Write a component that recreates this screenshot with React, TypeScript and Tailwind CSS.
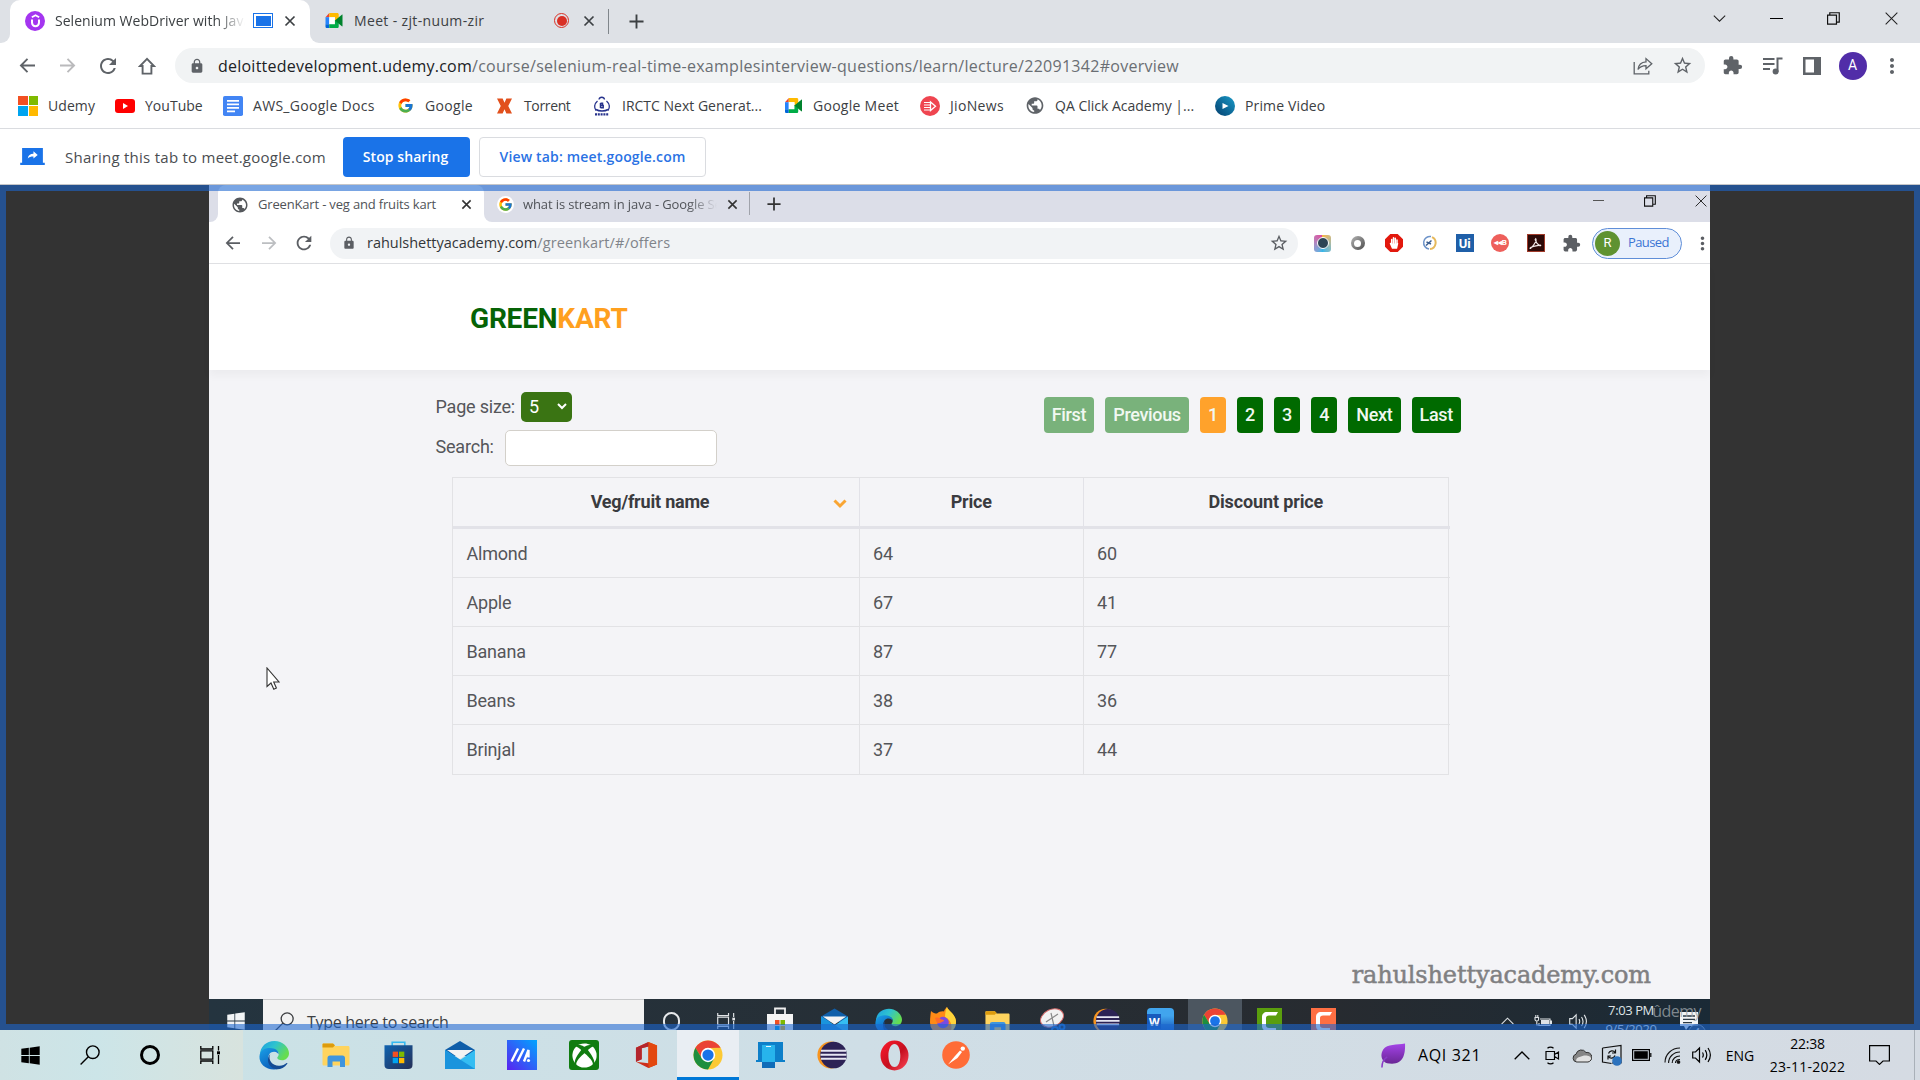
import type { ReactNode } from "react";
import { FcGoogle } from "react-icons/fc";
import { FaXbox, FaWindows } from "react-icons/fa";
import { MdLock, MdStarBorder, MdExtension, MdRefresh, MdPublic, MdMoreVert } from "react-icons/md";

/* ---------- line icons ---------- */

const Cross = ({ className = "" }: { className?: string }) => (
  <svg viewBox="0 0 12 12" className={className} fill="none" stroke="currentColor" strokeWidth="1.7">
    <path d="M1.5 1.5l9 9M10.5 1.5l-9 9" />
  </svg>
);

const Plus = ({ className = "" }: { className?: string }) => (
  <svg viewBox="0 0 16 16" className={className} fill="none" stroke="currentColor" strokeWidth="2">
    <path d="M8 0.5v15M0.5 8h15" />
  </svg>
);

const Arrow = ({ className = "" }: { className?: string }) => (
  <svg viewBox="0 0 18 16" className={className} fill="none" stroke="currentColor" strokeWidth="2">
    <path d="M17 8H2M9 1L2 8l7 7" />
  </svg>
);

const HomeIcon = () => (
  <svg viewBox="0 0 18 18" className="h-[18px] w-[18px]" fill="none" stroke="#5f6368" strokeWidth="1.9">
    <path d="M9 1.8L2 9h2.6v7.6h8.8V9H16z" />
  </svg>
);

const ShareIcon = () => (
  <svg viewBox="0 0 20 20" className="h-5 w-5" fill="none" stroke="#5f6368" strokeWidth="1.3">
    <path d="M1.2 6v11.8h14.6v-3" />
    <path d="M5 13.5c.6-5 3.6-7.3 8-7.6V2.6l5.8 5.2-5.8 5v-3.2c-3.6 0-6 1-8 3.9z" />
  </svg>
);

const QueueIcon = () => (
  <svg viewBox="0 0 20 20" className="h-5 w-5" fill="none" stroke="#5f6368" strokeWidth="2">
    <path d="M0 3h11.5M0 8h11.5M0 13h7M14.5 16V2.5h5" />
    <circle cx="12.6" cy="15.6" r="2" fill="#5f6368" />
  </svg>
);

const SidePanelIcon = () => (
  <svg viewBox="0 0 18 18" className="h-[18px] w-[18px]">
    <path d="M0 0h18v18H0z" fill="#5f6368" />
    <path d="M2.5 2.5h8.5v13H2.5z" fill="#fff" />
  </svg>
);

const Restore = ({ className = "" }: { className?: string }) => (
  <svg viewBox="0 0 14 14" className={className} fill="none" stroke="#111" strokeWidth="1.3">
    <path d="M.6 3.4h9.6V13H.6zM3 3.4V.8h10.2v10h-3" />
  </svg>
);

const ThinCross = ({ className = "" }: { className?: string }) => (
  <svg viewBox="0 0 14 14" className={className} fill="none" stroke="#222" strokeWidth="1.1">
    <path d="M.7.7l12.6 12.6M13.3.7L.7 13.3" />
  </svg>
);

const ChevronUp = ({ className = "" }: { className?: string }) => (
  <svg viewBox="0 0 16 9" className={className} fill="none" stroke="currentColor" strokeWidth="1.3">
    <path d="M.7 8.3L8 1l7.3 7.3" />
  </svg>
);

const SearchIcon = ({ className = "" }: { className?: string }) => (
  <svg viewBox="0 0 20 20" className={className} fill="none" stroke="currentColor" strokeWidth="1.4">
    <circle cx="12.8" cy="7.2" r="6.3" />
    <path d="M8.3 11.7L.6 19.4" />
  </svg>
);

const TaskView = ({ className = "" }: { className?: string }) => (
  <svg viewBox="0 0 20 20" className={className} fill="none" stroke="currentColor" strokeWidth="1.3">
    <path d="M.8 1v3h12V1M.8 19v-3h12v3M.8 5.8h12v8.4H.8zM18.5 1v4.5M18.5 10v9" />
    <path d="M17 6.3h3v3h-3z" fill="currentColor" stroke="none" />
  </svg>
);

const Volume = ({ className = "" }: { className?: string }) => (
  <svg viewBox="0 0 20 18" className={className} fill="none" stroke="currentColor" strokeWidth="1.2">
    <path d="M.7 6v6h2.8l4 4V2l-4 4zM10.5 6.5c1 1.6 1 3.4 0 5M13.2 4.2c2 3 2 6.6 0 9.6M16 2c3 4.4 3 9.6 0 14" />
  </svg>
);

/* ---------- brand icons ---------- */

const MeetIcon = ({ className = "" }: { className?: string }) => (
  <svg viewBox="0 0 20 18" className={className}>
    <path d="M5 1v4.500H1z" fill="#ea4335" />
    <path d="M1 5.500h4V13H1z" fill="#2684fc" />
    <path d="M1 13h4v4H2.400C1.600 17 1 16.400 1 15.600z" fill="#0066da" />
    <path d="M5 1h8.500c.8 0 1.500.6 1.500 1.400V7l-4 3V5.500H5z" fill="#ffba00" />
    <path d="M5 5.500h6V13H5z" fill="#fff" />
    <path d="M5 13h6V8.500l4 2.500v4.600c0 .8-.7 1.400-1.500 1.400H5z" fill="#00ac47" />
    <path d="M11 9l7.300-6.200c.4-.3.700-.1.700.3v11.800c0 .4-.3.600-.7.300z" fill="#00832d" />
  </svg>
);

const Chrome = ({ className = "" }: { className?: string }) => (
  <svg viewBox="0 0 32 32" className={className}>
    <circle cx="16" cy="16" r="15.500" fill="#fcc934" />
    <path d="M2.580 8.250a15.500 15.500 0 0 1 26.840 0L16 8.500l-6.500 11.250z" fill="#ea4335" />
    <path d="M2.580 8.250A15.500 15.500 0 0 0 16 31.500l6.500-11.750H9.500z" fill="#1e8e3e" />
    <circle cx="16" cy="16" r="7.700" fill="#fff" />
    <circle cx="16" cy="16" r="6" fill="#1a73e8" />
  </svg>
);

const Edge = ({ className = "" }: { className?: string }) => (
  <svg viewBox="0 0 32 32" className={className}>
    <defs>
      <linearGradient id="edgeTop" x1="0" y1="0" x2="1" y2="0.500">
        <stop offset="0" stopColor="#1b9de2" />
        <stop offset=".5" stopColor="#2fc3cf" />
        <stop offset="1" stopColor="#66dd4f" />
      </linearGradient>
      <linearGradient id="edgeSide" x1="0" y1="0" x2="0.600" y2="1">
        <stop offset="0" stopColor="#1aa0e8" />
        <stop offset="1" stopColor="#0b5cb8" />
      </linearGradient>
    </defs>
    <path d="M1 16C1 7 8 1 16.500 1S32 7.500 32 14c0 4.500-3.500 7.500-7.500 7.500-3 0-5-1-5-2.500 0-1 1.500-1.500 1.500-4 0-3.500-3.500-5-7-5C8 10 3 12 1 16z" fill="url(#edgeTop)" />
    <path d="M.5 17.500C1 11 6 8.500 11.500 8.500c6 0 9.500 3 9.500 6.500 0 0-2-2.500-5-2.500-4 0-6 3-6 6.500 0 7 6 11.500 12 11-2 1-4 1.500-6 1.500C7 31.500 0 25 .5 17.500z" fill="url(#edgeSide)" />
    <path d="M12 15c-3 7 3 13 10 12.500 3 0 5.500-1.500 7.500-3 .5-.3 1 .2.700.700C27 30 21.500 31.800 18 31 10 30 7 20 12 15z" fill="#134a94" />
  </svg>
);

const Folder = ({ className = "" }: { className?: string }) => (
  <svg viewBox="0 0 28 24" className={className}>
    <path d="M.5 1.500C.5.700 1 .5 1.500.5h9.500l2 2.500h13c1 0 1.500.5 1.500 1.500V21c0 1-.5 1.500-1.500 1.500H2C1 22.500.5 22 .5 21z" fill="#ffd45e" />
    <path d="M.5 1.500C.5.700 1 .5 1.500.5h9.500l2 1.800-2 2.200H.5z" fill="#dd9b0c" />
    <path d="M5.500 24v-9c0-1.500 1-2.500 2.500-2.500h12.500c1.500 0 2.500 1 2.500 2.500v9h-5v-5.500h-7.500V24z" fill="#3f95dd" />
  </svg>
);

const Store = ({ className = "" }: { className?: string }) => (
  <svg viewBox="0 0 30 30" className={className}>
    <defs>
      <linearGradient id="storeBag" x1="0" y1="0" x2="1" y2="1">
        <stop offset="0" stopColor="#0f63b0" />
        <stop offset="1" stopColor="#252f56" />
      </linearGradient>
    </defs>
    <path d="M8.500 6V1.800h13V6" fill="none" stroke="#35b9f0" strokeWidth="1.700" />
    <path d="M.5 5h29v20c0 3-1.500 4.500-4.500 4.500H5C2 29.500.5 28 .5 25z" fill="url(#storeBag)" />
    <path d="M9 11.500h5.500V17H9z" fill="#f25022" />
    <path d="M15.500 11.500H21V17h-5.500z" fill="#7fba00" />
    <path d="M9 18h5.500v5.500H9z" fill="#00a4ef" />
    <path d="M15.500 18H21v5.500h-5.500z" fill="#ffb900" />
  </svg>
);

const WhiteStore = () => (
  <svg viewBox="0 0 26 28" className="h-7 w-[26px]">
    <path d="M8 8V1.500h10V8" fill="none" stroke="#eee" strokeWidth="1.800" />
    <path d="M0 7h26v21H0z" fill="#f4f4f4" />
    <path d="M8 13h4.500v5H8z" fill="#f25022" />
    <path d="M13.500 13H18v5h-4.500z" fill="#7fba00" />
    <path d="M8 19h4.500v5H8z" fill="#00a4ef" />
    <path d="M13.500 19H18v5h-4.500z" fill="#ffb900" />
  </svg>
);

const Mail = ({ className = "" }: { className?: string }) => (
  <svg viewBox="0 0 30 28" className={className}>
    <path d="M0 9L15 0l15 9v6H0z" fill="#0f5ea9" />
    <path d="M0 9l15 10L30 9v19H0z" fill="#35bdf2" />
    <path d="M0 9l30 19H0z" fill="#1a94dd" />
    <path d="M2 9h26L15 18z" fill="#f3f3f3" />
  </svg>
);

const Eclipse = ({ className = "" }: { className?: string }) => (
  <svg viewBox="0 0 30 28" className={className}>
    <circle cx="14" cy="14" r="13.600" fill="#f7941e" />
    <circle cx="16.500" cy="14" r="13.300" fill="#2c2255" />
    <path d="M4 9.800h25M3.500 13.800h26M4 17.800h25" stroke="#e6e6f2" strokeWidth="2" />
  </svg>
);

const MyAsus = () => (
  <svg viewBox="0 0 30 30" className="h-[30px] w-[30px]">
    <defs>
      <linearGradient id="asus" x1="1" y1="0" x2="0" y2="1">
        <stop offset="0" stopColor="#00a5ff" />
        <stop offset="1" stopColor="#5a22f0" />
      </linearGradient>
    </defs>
    <path d="M0 0h30v30H0z" fill="url(#asus)" />
    <path d="M4.500 21.500l6.500-13M10.500 21.500L17 8.500" stroke="#fff" strokeWidth="2.400" />
    <path d="M17 21.500l4.500-11.500v7.500" stroke="#fff" strokeWidth="2.400" fill="none" />
    <circle cx="21.500" cy="20.500" r="1.600" fill="#fff" />
  </svg>
);

const Xbox = () => (
  <span className="flex h-[30px] w-[30px] items-center justify-center rounded-[3px] bg-[#107c10]">
    <FaXbox className="h-[25px] w-[25px] text-white" />
  </span>
);

const Office = () => (
  <svg viewBox="0 0 24 28" className="h-7 w-[23px]">
    <defs>
      <linearGradient id="office" x1="0" y1="0" x2="0" y2="1">
        <stop offset="0" stopColor="#e8590c" />
        <stop offset="1" stopColor="#c8281e" />
      </linearGradient>
    </defs>
    <path d="M1 6.500L14 .5l9 3.500v20l-9 3.500L1 21l13 1.500V5L7 7v11.500L1 21z" fill="url(#office)" />
    <path d="M14 .5l9 3.500v20l-9 3.500z" fill="#e3480f" />
    <path d="M1 6.500L14 .5V5L7 7v11.500L1 21z" fill="#b3252d" />
  </svg>
);

const Device = () => (
  <svg viewBox="0 0 30 28" className="h-[28px] w-[30px]">
    <path d="M3 1h25v18h2v2H1v-2h2z" fill="#0d7fc9" />
    <path d="M7 4h13v23H7z" fill="#0f6cb8" />
    <path d="M7 4h13v17H7z" fill="#27b4ec" />
    <path d="M11 5.500h5" stroke="#e8f8ff" />
  </svg>
);

const Opera = () => (
  <svg viewBox="0 0 30 32" className="h-[31px] w-[29px]">
    <defs>
      <linearGradient id="opera" x1="0" y1="0" x2="1" y2="1">
        <stop offset="0" stopColor="#ff1b2d" />
        <stop offset=".55" stopColor="#c50f1f" />
        <stop offset="1" stopColor="#ff4b5b" />
      </linearGradient>
    </defs>
    <path fillRule="evenodd" d="M15 .5a14.500 15.500 0 1 0 0 31 14.500 15.500 0 1 0 0-31zm0 3.500c4 0 6 5.500 6 12s-2 12-6 12-6.300-5.500-6.300-12S11 4 15 4z" fill="url(#opera)" />
  </svg>
);

const Postman = () => (
  <svg viewBox="0 0 28 28" className="h-[28px] w-[28px]">
    <circle cx="14" cy="14" r="13.800" fill="#ff6c37" />
    <path d="M6 23.500L13 15l5-5.500 2 1.500-4.500 6z" fill="#fff" />
    <circle cx="20.800" cy="7.600" r="2.200" fill="#fff" />
  </svg>
);

const Leaf = () => (
  <svg viewBox="0 0 26 26" className="h-[25px] w-[26px]">
    <defs>
      <linearGradient id="leaf" x1="0" y1="0" x2="0" y2="1">
        <stop offset="0" stopColor="#a443e8" />
        <stop offset="1" stopColor="#6a2795" />
      </linearGradient>
    </defs>
    <path d="M25.500.5C26 11 24 21.500 12 21.500c-4 0-7-.5-8.500-2.500C.5 16 0 11 3 6.500 7 1 17 2 25.500.5z" fill="url(#leaf)" />
    <path d="M1.500 25.500C1.500 21 3 17 7 14.500" stroke="#8a3bc8" strokeWidth="1.600" fill="none" />
  </svg>
);

const Firefox = () => (
  <svg viewBox="0 0 28 28" className="h-7 w-7">
    <path d="M2 4c2 2 4 2.500 6 2.500 2-2 5-2.500 7-2 .5-2 2-3.500 3-4.500 1 4 9 7 9 15.500A13 12.500 0 0 1 1 15.500C1 11 1.500 8 2 4z" fill="#ff8a16" />
    <path d="M18 0c1 4 9 7 9 15 0 5-3 8-5 9 2-8-2-12-6-14 0-4 1-8 2-10z" fill="#ffd43a" />
    <circle cx="14" cy="15.500" r="5.800" fill="#7a4be0" />
    <path d="M6 11c3-1 5 0 6 1.500 2 0 3 .5 3 1.500-3 1-4 3-7 2z" fill="#ff6a2b" />
  </svg>
);

const Snip = () => (
  <svg viewBox="0 0 28 26" className="h-[26px] w-7">
    <ellipse cx="14" cy="10" rx="12" ry="8.500" transform="rotate(-25 14 10)" fill="#f1f1f1" stroke="#d46a6a" />
    <path d="M8 14L20 6M13 5l3 13" stroke="#888" strokeWidth="1.200" />
    <circle cx="17" cy="22" r="3" fill="none" stroke="#1f6fc4" strokeWidth="2" />
    <circle cx="24" cy="19" r="2.500" fill="none" stroke="#1f6fc4" strokeWidth="2" />
  </svg>
);

const Word = () => (
  <span className="flex h-[26px] w-[27px] items-center rounded-sm bg-linear-to-b from-[#41a5ee] from-30% via-[#2b7cd3] via-60% to-[#185abd]">
    <span className="flex h-[15px] w-[14px] items-center justify-center bg-[#185abd] font-['Open_Sans'] text-[11px] leading-none font-bold text-white">
      W
    </span>
  </span>
);

const Camtasia = ({ className = "" }: { className?: string }) => (
  <svg viewBox="0 0 27 27" className={`h-[27px] w-[27px] ${className}`}>
    <path d="M1 0h25v27H1z" fill="currentColor" />
    <path d="M22 4H11c-3 0-5 2-5 5v9c0 3 2 5 5 5h9v-3h-7c-2 0-3-1-3-2.500V10c0-1.500 1-2.500 3-2.500h7z" fill="#fff" />
  </svg>
);

/* ---------- outer browser ---------- */

const Cell = ({ className = "", children }: { className?: string; children?: ReactNode }) => (
  <span className={`flex shrink-0 items-center justify-center ${className}`}>{children}</span>
);

function TabStrip() {
  return (
    <div className="flex h-[43px] bg-[#dee1e6] text-[14px] text-[#3c4043]">
      <div className="flex w-[10px] bg-white">
        <div className="flex-1 rounded-br-[9px] bg-[#dee1e6]" />
      </div>
      <div className="flex w-[300px] items-center rounded-t-[10px] bg-white pb-[2px] pl-[15px]">
        <span className="flex h-5 w-5 items-center justify-center rounded-full bg-[#a435f0]">
          <svg viewBox="0 0 12 16" className="h-[15px] w-[11px]" fill="none" stroke="#fff" strokeWidth="2.200">
            <path d="M2.200 7v3.500a3.800 3.800 0 0 0 7.600 0V7" />
            <path d="M2 4.500l4-2.300 4 2.300" strokeWidth="1.900" />
          </svg>
        </span>
        <span className="ml-[10px] w-[190px] overflow-hidden mask-r-from-85% whitespace-nowrap tracking-[0.04px]">
          Selenium WebDriver with Java
        </span>
        <span className="ml-2 flex h-[15px] w-5 border-[1.500px] border-[#1a73e8] p-[1.500px]">
          <span className="flex-1 bg-[#1a73e8]" />
        </span>
        <Cross className="ml-[11px] h-[12px] w-[12px]" />
      </div>
      <div className="flex w-[10px] bg-white">
        <div className="flex-1 rounded-bl-[9px] bg-[#dee1e6]" />
      </div>
      <div className="flex w-[288px] items-center pb-[2px]">
        <MeetIcon className="ml-[4px] h-[17px] w-[20px]" />
        <span className="ml-[10px] w-[200px] tracking-[0.350px]">Meet - zjt-nuum-zir</span>
        <span className="flex h-[15px] w-[15px] items-center justify-center rounded-full border-[1.500px] border-[#d93025]">
          <span className="h-[10px] w-[10px] rounded-full bg-[#d93025]" />
        </span>
        <Cross className="ml-[14px] h-[12px] w-[12px]" />
      </div>
      <span className="mt-[9px] h-[25px] w-px bg-[#80868b]" />
      <Plus className="mt-[14px] ml-[20px] h-[15px] w-[15px]" />
      <div className="ml-auto flex h-[37px]">
        <Cell className="w-[57px]">
          <ChevronUp className="h-[7px] w-[13px] rotate-180 text-[#222]" />
        </Cell>
        <Cell className="w-[57px]">
          <span className="h-px w-[13px] bg-black" />
        </Cell>
        <Cell className="w-[57px]">
          <Restore className="h-[13px] w-[13px]" />
        </Cell>
        <Cell className="w-[58px]">
          <ThinCross className="h-[13px] w-[13px]" />
        </Cell>
      </div>
    </div>
  );
}

function Toolbar() {
  return (
    <div className="flex h-[45px] items-center pl-[7px] text-[#5f6368]">
      <Cell className="w-10">
        <Arrow className="h-[15px] w-[17px]" />
      </Cell>
      <Cell className="w-10 text-[#bababc]">
        <Arrow className="h-[15px] w-[17px] rotate-180" />
      </Cell>
      <Cell className="w-10 pl-[2px]">
        <MdRefresh className="h-[24px] w-[24px]" />
      </Cell>
      <Cell className="w-10">
        <HomeIcon />
      </Cell>
      <div className="ml-[8px] flex h-[35px] w-[1530px] items-center rounded-full bg-[#f1f3f4] pl-[14px]">
        <MdLock className="h-4 w-4" />
        <span className="ml-[13px] text-[16px] tracking-[0.230px] whitespace-nowrap text-[#202124]">
          deloittedevelopment.udemy.com
        </span>
        <span className="text-[16px] tracking-[0.275px] whitespace-nowrap text-[#6a6e73]">
          /course/selenium-real-time-examplesinterview-questions/learn/lecture/22091342#overview
        </span>
        <Cell className="ml-auto w-10 pl-[2px]">
          <ShareIcon />
        </Cell>
        <Cell className="mr-[3px] w-10">
          <MdStarBorder className="h-[21px] w-[21px]" />
        </Cell>
      </div>
      <Cell className="ml-[7px] w-10">
        <MdExtension className="h-[21px] w-[21px]" />
      </Cell>
      <Cell className="w-10 pl-px">
        <QueueIcon />
      </Cell>
      <Cell className="w-10">
        <SidePanelIcon />
      </Cell>
      <Cell className="w-[41px]">
        <Cell className="h-7 w-7 rounded-full bg-[#512da8] font-['Roboto'] text-[14px] text-white">A</Cell>
      </Cell>
      <Cell className="w-[38px]">
        <MdMoreVert className="h-[24px] w-[24px]" />
      </Cell>
    </div>
  );
}

const MsTiles = () => (
  <span className="grid h-5 w-5 grid-cols-2 gap-px">
    <span className="bg-[#f25022]" />
    <span className="bg-[#7fba00]" />
    <span className="bg-[#00a4ef]" />
    <span className="bg-[#ffb900]" />
  </span>
);

const YouTube = () => (
  <svg viewBox="0 0 20 14" className="h-[14px] w-5">
    <rect width="20" height="14" rx="3" fill="#f00" />
    <path d="M8 4l5 3-5 3z" fill="#fff" />
  </svg>
);

const Docs = () => (
  <svg viewBox="0 0 20 20" className="h-5 w-5">
    <rect width="20" height="20" rx="1.800" fill="#4285f4" />
    <path d="M4 4.800h12M4 8.300h12M4 11.800h12M4 15.300h8" stroke="#fff" strokeWidth="1.700" />
  </svg>
);

const TorrentX = () => (
  <svg viewBox="0 0 16 16" className="h-[16px] w-[15px]" fill="#e2501c">
    <path d="M0 0h6l2 4.500L10 0h6l-4 8 4 8h-6l-2-4.500L6 16H0l4-8z" />
  </svg>
);

const Irctc = () => (
  <svg viewBox="0 0 20 20" className="h-5 w-5" fill="none" stroke="#26328c">
    <path d="M5.500 5C2 8 2 12 4 14.500M14.500 5c3.500 3 3.500 7 1.500 9.500" strokeWidth="1.300" />
    <path d="M4 13.500c3 2 9 2 12 0" strokeWidth="1.600" />
    <path d="M8.500 7v5M8.500 7.300h2v2h-2M8.500 9.600h2.700v2.200H8.500" strokeWidth="1.500" />
    <path d="M7 3.500c.5-3 5-3 5.500 0" strokeWidth="1.300" />
    <path d="M3 18.400h14" strokeWidth="2.200" strokeDasharray="2 .8" />
  </svg>
);

const Jio = () => (
  <svg viewBox="0 0 20 20" className="h-5 w-5">
    <circle cx="10" cy="10" r="10" fill="#ef4550" />
    <path d="M4 6.500h6M4 9h6M4 11.500h6M4 14h6" stroke="#fff" strokeWidth="1.100" />
    <path d="M10.500 6v8.500l5-4.200z" fill="none" stroke="#fff" strokeWidth="1.300" />
  </svg>
);

const Prime = () => (
  <span className="flex h-5 w-5 items-center justify-center rounded-full bg-linear-to-tr from-[#06406f] to-[#1b9cc9]">
    <svg viewBox="0 0 6 6" className="h-[6px] w-[7px]" fill="#fff">
      <path d="M0 0l6 3-6 3z" />
    </svg>
  </span>
);

function Bookmarks() {
  const items: { icon: ReactNode; label: string; cls: string }[] = [
    { icon: <MsTiles />, label: "Udemy", cls: "w-[97px] tracking-[0.080px]" },
    { icon: <YouTube />, label: "YouTube", cls: "w-[108px] tracking-[0.020px]" },
    { icon: <Docs />, label: "AWS_Google Docs", cls: "w-[172px] tracking-[0.300px]" },
    { icon: <FcGoogle className="h-[17px] w-[17px]" />, label: "Google", cls: "w-[99px] tracking-[0.330px]" },
    { icon: <TorrentX />, label: "Torrent", cls: "w-[98px] tracking-[-0.360px]" },
    { icon: <Irctc />, label: "IRCTC Next Generat...", cls: "w-[191px]" },
    { icon: <MeetIcon className="h-[17px] w-[19px]" />, label: "Google Meet", cls: "w-[137px] tracking-[0.280px]" },
    { icon: <Jio />, label: "JioNews", cls: "w-[105px] tracking-[0.340px]" },
    { icon: <MdPublic className="h-[21px] w-[21px] text-[#5f6368]" />, label: "QA Click Academy |...", cls: "w-[190px]" },
    { icon: <Prime />, label: "Prime Video", cls: "w-[120px] tracking-[0.140px]" },
  ];
  return (
    <div className="flex h-[41px] items-center border-b border-[#dadce0] pb-[5px] pl-[18px] text-[14px] text-[#3c4043]">
      {items.map((b) => (
        <div key={b.label} className={`flex shrink-0 items-center gap-[10px] whitespace-nowrap ${b.cls}`}>
          <Cell className="h-5 w-5">{b.icon}</Cell>
          <span className="pb-px">{b.label}</span>
        </div>
      ))}
    </div>
  );
}

function SharingBar() {
  return (
    <div className="flex h-[56px] items-center border-b border-[#c6c6c8] pl-5 text-[#4a4d51]">
      <svg viewBox="0 0 26 18" className="h-[17px] w-[25px]">
        <path d="M2 0h22v15.500h2V18H0v-2.500h2z" fill="#1a73e8" />
        <path d="M8 11c.5-3.500 2.500-4.800 6-5V3.500L18.500 7.500 14 11.200V9c-3 0-4.500.5-6 2z" fill="#fff" />
      </svg>
      <span className="ml-5 w-[278px] pt-px text-[15px] tracking-[0.260px] whitespace-nowrap">
        Sharing this tab to meet.google.com
      </span>
      <span className="flex h-10 w-[127px] items-center justify-center rounded-[4px] bg-[#1a73e8] pr-[2px] text-[14px] font-semibold tracking-[0.080px] text-white">
        Stop sharing
      </span>
      <span className="ml-[9px] flex h-10 w-[227px] items-center justify-center rounded-[4px] border border-[#dadce0] text-[14px] font-semibold tracking-[0.170px] text-[#2a72e4]">
        View tab: meet.google.com
      </span>
    </div>
  );
}

/* ---------- page shown inside the shared tab ---------- */

function InnerTabs() {
  return (
    <div className="flex h-[37px] bg-[#dcdee8] text-[13px] text-[#505358]">
      <div className="flex w-[9px] bg-white">
        <div className="flex-1 rounded-br-[8px] bg-[#dcdee8]" />
      </div>
      <div className="flex w-[266px] items-center rounded-t-[8px] bg-white pt-[2px] pl-[13px]">
        <MdPublic className="h-[18px] w-[18px] text-[#55585c]" />
        <span className="ml-[9px] w-[203px] tracking-[-0.170px] whitespace-nowrap">
          GreenKart - veg and fruits kart
        </span>
        <Cross className="h-[11px] w-[11px] text-[#333]" />
      </div>
      <div className="flex w-[8px] bg-white">
        <div className="flex-1 rounded-bl-[8px] bg-[#dcdee8]" />
      </div>
      <div className="flex w-[257px] items-center pt-[2px]">
        <Cell className="ml-[5px] h-[17px] w-[17px] rounded-full bg-white">
          <FcGoogle className="h-[15px] w-[15px]" />
        </Cell>
        <span className="ml-[9px] w-[194px] overflow-hidden mask-r-from-85% tracking-[-0.110px] whitespace-nowrap">
          what is stream in java - Google Search
        </span>
        <Cross className="ml-[10px] h-[11px] w-[11px] text-[#333]" />
      </div>
      <span className="mt-[7px] h-[23px] w-px bg-[#a0a3ab]" />
      <Plus className="mt-[12px] ml-[17px] h-[14px] w-[14px] text-[#333]" />
      <div className="mt-[9px] ml-auto flex h-[13px]">
        <Cell className="w-[51px]">
          <span className="h-[1.500px] w-[11px] bg-[#555]" />
        </Cell>
        <Cell className="w-[51px]">
          <Restore className="h-[12px] w-[12px]" />
        </Cell>
        <Cell className="mr-[-16px] w-[51px]">
          <ThinCross className="h-[12px] w-[12px]" />
        </Cell>
      </div>
    </div>
  );
}

function InnerToolbar() {
  return (
    <div className="flex h-[42px] items-center overflow-hidden border-b border-[#dfe0e3] bg-white pt-px pl-[6px] text-[#5b5e63]">
      <Cell className="w-[36px]">
        <Arrow className="h-[14px] w-[16px]" />
      </Cell>
      <Cell className="w-[35px] text-[#bcbec1]">
        <Arrow className="h-[14px] w-[16px] rotate-180" />
      </Cell>
      <Cell className="w-[36px]">
        <MdRefresh className="h-[22px] w-[22px]" />
      </Cell>
      <div className="ml-[8px] flex h-[31px] w-[968px] shrink-0 items-center rounded-full bg-[#f1f3f5] pl-[12px]">
        <MdLock className="h-[14px] w-[14px]" />
        <span className="ml-[11px] text-[14.500px] tracking-[-0.020px] text-[#333639]">rahulshettyacademy.com</span>
        <span className="text-[14.500px] tracking-[0.130px] text-[#80848a]">/greenkart/#/offers</span>
        <MdStarBorder className="mr-[9px] ml-auto h-[20px] w-[20px]" />
      </div>
      <div className="ml-[7px] grid shrink-0 grid-cols-[repeat(8,35.500px)] place-items-center">
        <span className="flex h-[17px] w-[17px] items-center justify-center rounded-[3px] bg-conic from-[#f5b544] via-[#35b6e8] via-50% to-[#e0449c]">
          <span className="h-[12px] w-[12px] rounded-full border border-white bg-[#2c4454]" />
        </span>
        <span className="flex h-[14px] w-[14px] items-center justify-center rounded-full bg-linear-to-br from-[#b5b5b5] to-[#4d4d4d]">
          <span className="mr-[2px] h-[7px] w-[7px] rounded-full bg-white" />
        </span>
        <svg viewBox="0 0 18 18" className="h-[18px] w-[18px]">
          <path d="M5.300 0h7.400L18 5.300v7.400L12.700 18H5.300L0 12.700V5.300z" fill="#e2180d" />
          <path d="M6.700 12V5.500M8.500 10V3.800M10.300 10V4.200M12 11V6M5.500 9.500l2 4.500h4l1-4.500" stroke="#fff" strokeWidth="1.500" strokeLinecap="round" fill="#fff" />
        </svg>
        <svg viewBox="0 0 16 16" className="h-4 w-4" fill="none">
          <path d="M10 1.500A6.200 6.200 0 1 0 8 14" stroke="#6d93c9" strokeWidth="1.500" />
          <path d="M11 2.200A6.200 6.200 0 0 1 9 14" stroke="#e6b95c" strokeWidth="2" />
          <path d="M5 10.500l5.500-5M5.500 7l4.500 2" stroke="#3c5f91" strokeWidth="1.500" />
        </svg>
        <Cell className="h-[18px] w-[18px] bg-[#1f5fa8] font-['Roboto'] text-[13px] leading-none font-bold text-white">Ui</Cell>
        <Cell className="h-[18px] w-[18px] rounded-full bg-[#ee5f5b] font-['Roboto'] text-[8px] leading-none font-bold text-white">◂◂B</Cell>
        <span className="flex h-[18px] w-[18px] items-center justify-center border border-[#a13b2a] bg-[#2d0a08]">
          <svg viewBox="0 0 12 12" className="h-[13px] w-[13px]" fill="none" stroke="#f2e9e8" strokeWidth="1.100">
            <path d="M6 1c1.500 2-1 6-4.500 9.500C0 11 1 8.500 10.500 7.500 12 8.500 8 9 5.500 2" />
          </svg>
        </span>
        <MdExtension className="h-[19px] w-[19px]" />
      </div>
      <div className="ml-[3px] flex h-[31px] w-[90px] shrink-0 items-center rounded-full border-[1.500px] border-[#5f8ed8] bg-[#e9f0fc] pl-[2px]">
        <Cell className="h-[25px] w-[25px] rounded-full bg-[#5f9231] font-['Roboto'] text-[13px] text-white">R</Cell>
        <span className="ml-[8px] text-[13px] tracking-[-0.600px] text-[#3b74d4]">Paused</span>
      </div>
      <MdMoreVert className="ml-[10px] h-[21px] w-[21px] shrink-0" />
    </div>
  );
}

const PAGES = ["First", "Previous", "1", "2", "3", "4", "Next", "Last"];

const pageTone = (label: string) =>
  label === "1" ? "bg-[#ffa22b]" : label === "First" || label === "Previous" ? "bg-[#79b27b]" : "bg-[#006a00]";

const PRODUCTS = [
  { name: "Almond", price: 64, discount: 60 },
  { name: "Apple", price: 67, discount: 41 },
  { name: "Banana", price: 87, discount: 77 },
  { name: "Beans", price: 38, discount: 36 },
  { name: "Brinjal", price: 37, discount: 44 },
];

function GreenKart() {
  return (
    <div className="flex flex-1 flex-col bg-[#f4f4f7] font-['Roboto'] text-[18px] tracking-[-0.200px] text-[#55565a]">
      <header className="z-0 flex h-[106px] shrink-0 items-center bg-white pt-[3px] pl-[261px] text-[28px] font-bold tracking-[-0.200px] shadow-[0_6px_8px_rgba(0,0,0,0.035)]">
        <span className="text-[#066306]">GREEN</span>
        <span className="text-[#ffa01e]">KART</span>
      </header>
      <section className="flex h-[107px] shrink-0 justify-between pr-[249px] pl-[226.500px]">
        <div className="flex flex-col gap-[8px] pt-[22px]">
          <div className="flex h-[30px] items-center">
            <span className="w-[85.500px] pb-[2px]">Page size:</span>
            <span className="flex h-[30px] w-[51px] items-center justify-between rounded-[5px] bg-[#3a7413] pr-[5px] pb-px pl-[8px] text-white">
              5
              <svg viewBox="0 0 10 7" className="h-[7px] w-[10px]" fill="none" stroke="#fff" strokeWidth="2">
                <path d="M1 1l4 4 4-4" />
              </svg>
            </span>
          </div>
          <div className="flex h-[36px] items-center">
            <span className="w-[69.500px] pb-[3px]">Search:</span>
            <span className="h-[36px] w-[212px] rounded-[5px] border-[1.500px] border-[#d3d0ca] bg-white" />
          </div>
        </div>
        <div className="mt-[27px] flex h-[36px] gap-[11px] self-start font-medium tracking-[-0.350px] text-[#f1f8f1]">
          {PAGES.map((p) => (
            <span key={p} className={`flex items-center justify-center rounded-[4px] pr-[8.200px] pb-px pl-[8px] ${pageTone(p)}`}>
              {p}
            </span>
          ))}
        </div>
      </section>
      <div className="ml-[243px] grid w-[997px] grid-cols-[407px_223.500px_366.500px] border border-[#e2e2e5]">
        <div className="flex h-[51px] items-center border-r border-b-[3px] border-[#e2e2e8] pb-[2px] font-bold text-[#3a3b3f]">
          <span className="flex-1 pr-[5px] text-center">Veg/fruit name</span>
          <svg viewBox="0 0 14 10" className="mt-[6px] mr-[12px] ml-[-19px] h-[10px] w-[14px]" fill="none" stroke="#f9a533" strokeWidth="3">
            <path d="M1.500 1.500L7 7l5.500-5.500" />
          </svg>
        </div>
        <div className="flex h-[51px] items-center justify-center border-r border-b-[3px] border-[#e2e2e8] pb-[2px] font-bold text-[#3a3b3f]">
          Price
        </div>
        <div className="flex h-[51px] items-center justify-center border-b-[3px] border-[#e2e2e8] pr-[2px] pb-[2px] font-bold tracking-[-0.130px] text-[#3a3b3f]">
          Discount price
        </div>
        {PRODUCTS.map((p, i) => {
          const line = i < PRODUCTS.length - 1 ? "border-b" : "";
          return (
            <div key={p.name} className="col-span-3 grid h-[49.100px] grid-cols-subgrid">
              <div className={`flex items-center border-r border-[#e2e2e5] pl-[13.500px] ${line}`}>{p.name}</div>
              <div className={`flex items-center border-r border-[#e2e2e5] pl-[13px] ${line}`}>{p.price}</div>
              <div className={`flex items-center border-[#e2e2e5] pl-[13.500px] ${line}`}>{p.discount}</div>
            </div>
          );
        })}
      </div>
      <div className="mt-auto mr-[59px] mb-[10px] self-end font-['DejaVu_Serif'] text-[24px] leading-[28px] tracking-[-0.130px] text-[#808082] [-webkit-text-stroke:0.500px_#808082]">
        rahulshettyacademy.com
      </div>
    </div>
  );
}

function InnerTaskbar() {
  const apps: { id: string; icon: ReactNode; cls?: string }[] = [
    { id: "cortana", icon: <span className="h-[19px] w-[17px] rounded-full border-[2.500px] border-[#e8eaec]" /> },
    { id: "tasks", icon: <TaskView className="h-[18px] w-[18px] text-[#e0e3e6]" /> },
    { id: "store", icon: <WhiteStore /> },
    { id: "mail", icon: <Mail className="h-[26px] w-[27px]" /> },
    { id: "edge", icon: <Edge className="h-[27px] w-[27px]" /> },
    { id: "firefox", icon: <Firefox /> },
    { id: "files", icon: <Folder className="h-[23px] w-[25px]" /> },
    { id: "snip", icon: <Snip /> },
    { id: "eclipse", icon: <Eclipse className="h-[26px] w-[27px]" /> },
    { id: "word", icon: <Word /> },
    { id: "chrome", icon: <Chrome className="h-[26px] w-[26px]" />, cls: "bg-[#4c5660]" },
    { id: "camtasia", icon: <Camtasia className="text-[#5a9e0d]" /> },
    { id: "recorder", icon: <Camtasia className="text-[#ff6f43]" /> },
  ];
  return (
    <div className="relative flex h-[31px] shrink-0 overflow-hidden bg-linear-to-r from-[#24343f] via-[#272b30] via-75% to-[#1a2a36]">
      <div className="flex h-[44px] w-[54px] shrink-0 items-center justify-center">
        <FaWindows className="h-[20px] w-[20px] text-[#f2f4f5]" />
      </div>
      <div className="flex h-[44px] w-[381px] shrink-0 items-center border-t border-[#c9cacc] bg-[#f2f2f2] pl-[12px] text-[#3d3f42]">
        <SearchIcon className="h-[19px] w-[19px]" />
        <span className="ml-[13px] text-[16px] tracking-[-0.300px]">Type here to search</span>
      </div>
      <div className="grid h-[44px] shrink-0 grid-cols-[repeat(13,54.400px)]">
        {apps.map((a) => (
          <Cell key={a.id} className={`h-[44px] ${a.cls ?? ""}`}>
            {a.icon}
          </Cell>
        ))}
      </div>
      <div className="ml-auto flex h-[44px] shrink-0 items-center text-[#dfe3e6]">
        <Cell className="w-[36px]">
          <ChevronUp className="h-[8px] w-[13px]" />
        </Cell>
        <Cell className="w-[35px]">
          <svg viewBox="0 0 18 12" className="h-[12px] w-[18px]" fill="none" stroke="currentColor" strokeWidth="1.100">
            <path d="M6 4h10v6.500H5V8M16.500 6v2.500h1V6zM1 2.500v2c0 1 1 1.500 1.800 1.500S4.600 5.500 4.600 4.500v-2zM1.800 0v2.500M3.800 0v2.500M2.800 6v4H5" />
            <path d="M7 5h8v4.500H7z" fill="currentColor" stroke="none" />
          </svg>
        </Cell>
        <Cell className="w-[36px]">
          <Volume className="h-[17px] w-[19px]" />
        </Cell>
        <div className="mr-[14px] flex w-[70px] flex-col items-center text-[13px] leading-[19px] tracking-[-0.400px] whitespace-nowrap">
          <span className="-mt-[2px]">7:03 PM</span>
          <span>9/5/2020</span>
        </div>
        <Cell className="mr-[12px] w-[18px]">
          <svg viewBox="0 0 18 18" className="h-[18px] w-[18px]">
            <path d="M0 0h18v14H9l-3 4-2-4H0z" fill="#f3f5f6" />
            <path d="M3 4h12M3 7.300h12M3 10.600h9" stroke="#2b3944" strokeWidth="1.300" />
          </svg>
        </Cell>
      </div>
      {/* player watermark over the clock area */}
      <span className="absolute top-[2px] right-[9px] text-[16px] leading-[20px] tracking-[-0.550px] text-[#9aa1a6]/80">
        ûdemy
      </span>
      <span className="absolute top-[25px] right-[4px] h-[18px] w-[18px] rounded-full border-[1.500px] border-[#8a949c] bg-[#39506b]/60 text-center text-[12px] leading-[15px] text-[#e6ebef]">
        4
      </span>
    </div>
  );
}

function SharedTab() {
  return (
    <div className="relative flex h-[845px] justify-center bg-[#333] pr-[1px]">
      <main className="flex w-[1501px] flex-col">
        <InnerTabs />
        <InnerToolbar />
        <GreenKart />
        <InnerTaskbar />
      </main>
      <svg viewBox="0 0 14 24" className="absolute top-[482px] left-[266px] h-[24px] w-[14px]" fill="#fff" stroke="#333" strokeWidth="1.100">
        <path d="M1 1v18.500l4-3.500 2.800 6.300 2.600-1.200-2.700-6.100h5.300z" />
      </svg>
      <div className="pointer-events-none absolute inset-0 border-[6px] border-[rgba(27,102,208,0.59)]" />
    </div>
  );
}

/* ---------- desktop taskbar ---------- */

function Taskbar() {
  const pinned: { id: string; icon: ReactNode }[] = [
    { id: "edge", icon: <Edge className="h-[30px] w-[30px]" /> },
    { id: "files", icon: <Folder className="h-[24px] w-[28px]" /> },
    { id: "store", icon: <Store className="h-[30px] w-[29px]" /> },
    { id: "mail", icon: <Mail className="h-[28px] w-[30px]" /> },
    { id: "asus", icon: <MyAsus /> },
    { id: "xbox", icon: <Xbox /> },
    { id: "office", icon: <Office /> },
    { id: "chrome", icon: <Chrome className="h-[30px] w-[30px]" /> },
    { id: "device", icon: <Device /> },
    { id: "eclipse", icon: <Eclipse className="h-[28px] w-[30px]" /> },
    { id: "opera", icon: <Opera /> },
    { id: "postman", icon: <Postman /> },
  ];
  return (
    <div className="flex h-[50px] bg-linear-to-r from-[#c9e3e6] via-[#cfdee6] via-45% to-[#d5dbe3] text-black">
      <div className="flex w-[243px] bg-linear-to-r from-[#cfe2e4] via-[#cce5e8] via-40% to-[#d8e3de]">
        <Cell className="w-[60px]">
          <FaWindows className="h-[21px] w-[21px]" />
        </Cell>
        <Cell className="w-[60px]">
          <SearchIcon className="h-5 w-5" />
        </Cell>
        <Cell className="w-[60px]">
          <span className="h-5 w-5 rounded-full border-[3px] border-black" />
        </Cell>
        <Cell className="w-[60px]">
          <TaskView className="h-5 w-5" />
        </Cell>
      </div>
      {pinned.map((p) => (
        <Cell key={p.id} className={`w-[62px] ${p.id === "chrome" ? "border-b-[3px] border-[#0078d7] bg-[#e9eef3] pt-[3px]" : ""}`}>
          {p.icon}
        </Cell>
      ))}
      <div className="ml-auto flex items-center">
        <Leaf />
        <span className="ml-[12px] w-[89px] text-[16px] tracking-[0.650px] whitespace-nowrap">AQI 321</span>
        <Cell className="w-[30px]">
          <ChevronUp className="h-[9px] w-[16px]" />
        </Cell>
        <Cell className="w-[30px]">
          <svg viewBox="0 0 15 19" className="h-[19px] w-[15px]" fill="none" stroke="currentColor" strokeWidth="1.200">
            <path d="M1 5.500h8.500v8H1zM9.500 8.500L13.500 6v7l-4-2.500M2.500 2.200C4 .8 7 .8 8.500 2.200M2.500 16.800c1.500 1.400 4.500 1.400 6 0" />
          </svg>
        </Cell>
        <Cell className="w-[30px]">
          <svg viewBox="0 0 20 15" className="h-[15px] w-5">
            <path d="M4.500 14A4 4 0 0 1 4 6.200 5.500 5.500 0 0 1 14 4.500a4.700 4.700 0 0 1 2 9.500z" fill="#858585" />
            <path d="M5 14c-2-2 0-4.500 2.500-5L12 7.500c3-.5 7 .5 7.300 3.500 0 2-1.500 3-3.300 3z" fill="#e2e2e2" />
            <path d="M4.500 14A4 4 0 0 1 4 6.200 5.500 5.500 0 0 1 14 4.500a4.700 4.700 0 0 1 2 9.500z" fill="none" stroke="#333" />
          </svg>
        </Cell>
        <Cell className="w-[30px]">
          <svg viewBox="0 0 22 22" className="h-[22px] w-[22px]" fill="none" stroke="#111" strokeWidth="1.200">
            <path d="M1.500 4L20 1.500V19H11M1.500 4v14l9 1.500" />
            <path d="M7.500 9.500c1-3 5-3.500 6.500-1M14.500 5.500V9H11M14 11.500c-1 3-5 3.500-6.500 1M7 15.500V12h3" />
            <circle cx="16" cy="17" r="4.800" fill="#2c72bd" stroke="none" />
          </svg>
        </Cell>
        <Cell className="w-[30px]">
          <svg viewBox="0 0 20 12" className="h-[12px] w-5" fill="none" stroke="#000" strokeWidth="1.200">
            <path d="M.6.600h16.800v10.800H.600zM18.800 4v4" />
            <path d="M2.200 2.200h13.600v7.600H2.200z" fill="#000" stroke="none" />
          </svg>
        </Cell>
        <Cell className="w-[30px]">
          <svg viewBox="0 0 17 17" className="h-[17px] w-[17px]" fill="none" stroke="#111" strokeWidth="1.100">
            <path d="M1 15.500C1 7.500 7.500 1 16 1M4.600 16C4.600 10 9.500 5 16 5M8.200 16c0-4 3.300-7 7.800-7M11.500 16c0-2 1.800-3.500 4.500-3.500" />
            <circle cx="14.500" cy="15" r="1.300" fill="#111" />
          </svg>
        </Cell>
        <Cell className="w-[30px]">
          <Volume className="h-[18px] w-5" />
        </Cell>
        <Cell className="ml-[6px] w-[34px] text-[14px]">ENG</Cell>
        <div className="flex w-[101px] flex-col items-center text-[14px] leading-[23px]">
          <span className="tracking-[-0.200px]">22:38</span>
          <span className="tracking-[0.270px]">23-11-2022</span>
        </div>
        <Cell className="w-[42px]">
          <svg viewBox="0 0 21 20" className="h-[20px] w-[21px]" fill="none" stroke="#000" strokeWidth="1.200">
            <path d="M.6.600h19.800v15.400H14l-3.500 3.400L7 16H.600z" />
          </svg>
        </Cell>
        <span className="ml-[14px] h-full w-px bg-[#a9b0b8]" />
        <span className="w-[5px]" />
      </div>
    </div>
  );
}

export default function App() {
  return (
    <div className="flex h-[1080px] w-[1920px] flex-col overflow-hidden bg-white font-['Open_Sans',sans-serif]">
      <TabStrip />
      <Toolbar />
      <Bookmarks />
      <SharingBar />
      <SharedTab />
      <Taskbar />
    </div>
  );
}
